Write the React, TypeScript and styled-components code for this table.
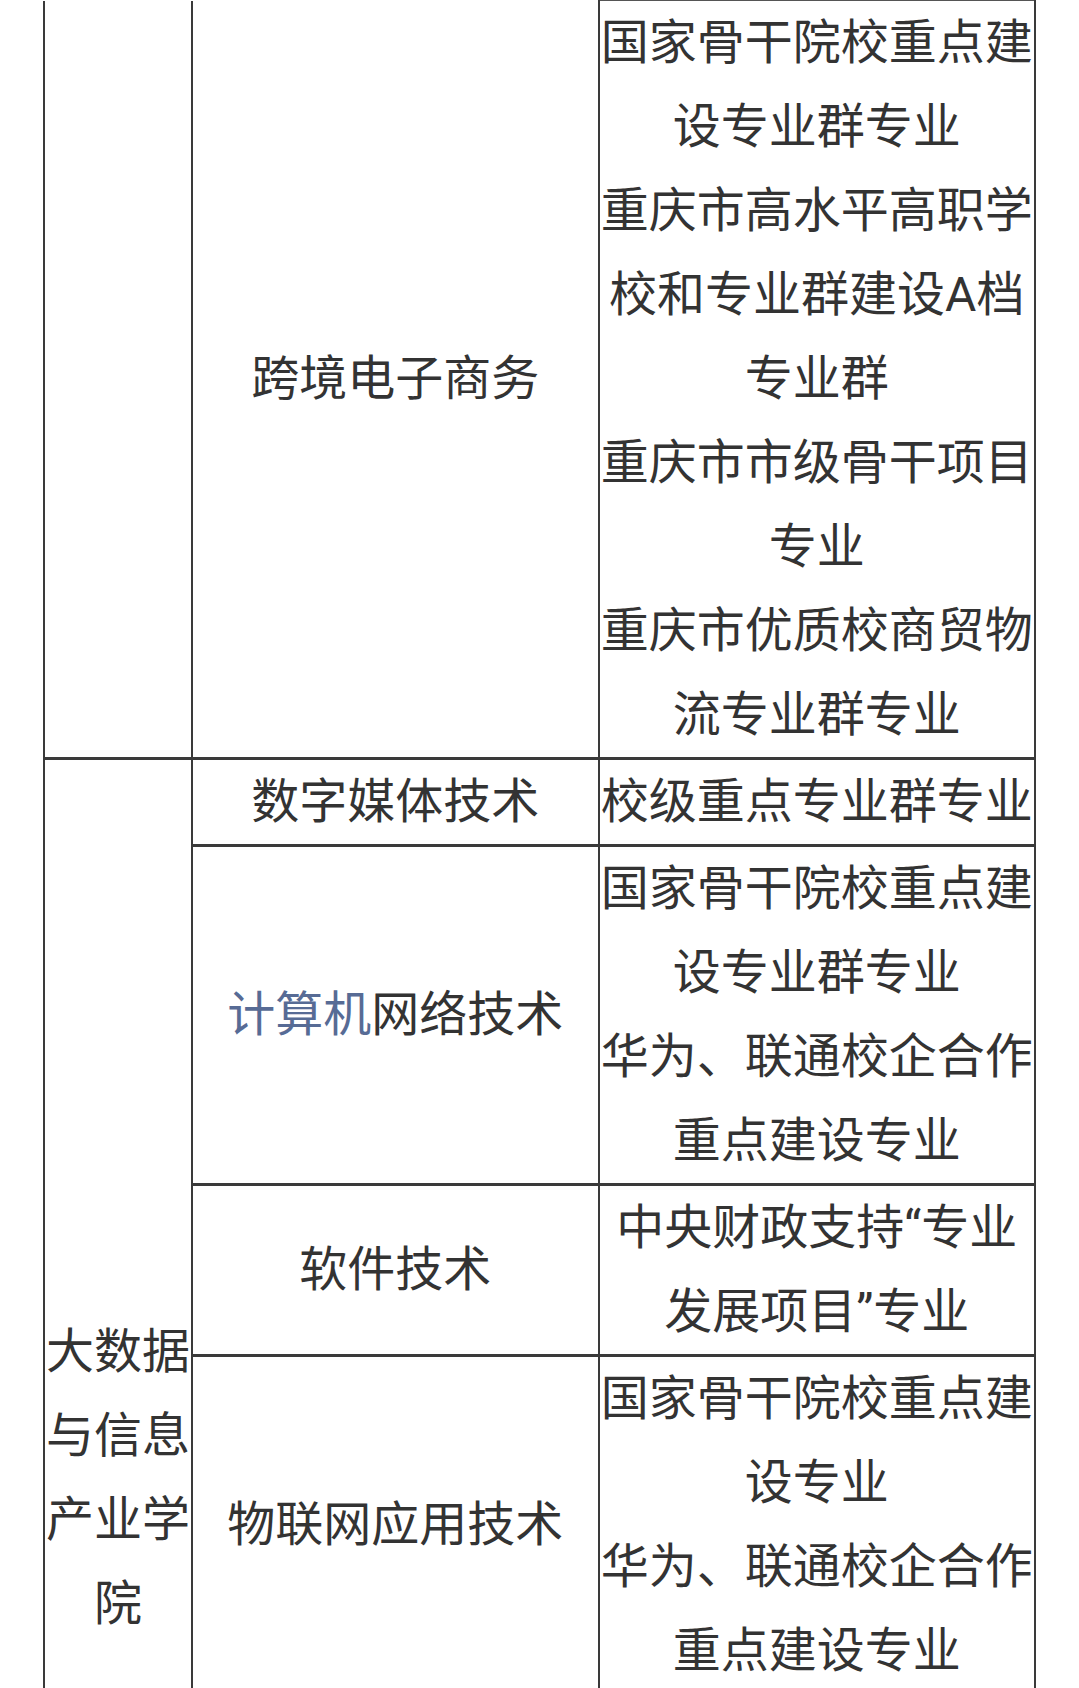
import React from 'react';
import styled, { createGlobalStyle } from 'styled-components';

const GlobalStyle = createGlobalStyle`
  html, body {
    margin: 0;
    padding: 0;
    background: #ffffff;
  }
  body {
    font-family: Roboto, "Noto Sans CJK SC", sans-serif;
    color: #333333;
  }
`;

const Page = styled.div`
  padding: 0 43px;
`;

const Table = styled.table`
  width: 993px;
  border-collapse: collapse;
  table-layout: fixed;
`;

const Cell = styled.td<{ $open?: boolean; $thinTop?: boolean }>`
  border: 2px solid #3a3a3a;
  border-top: ${(p) => (p.$open ? 'none' : p.$thinTop ? '1px solid #555' : '3px solid #3a3a3a')};
  padding: 0 1px;
  font-size: 48px;
  line-height: 84px;
  text-align: center;
  vertical-align: middle;
  word-break: break-all;
`;

const Note = styled.p`
  margin: 0;
`;

const Link = styled.span`
  color: #576b95;
`;

const Spacer = styled.div`
  height: 500px;
`;

interface Row {
  major: React.ReactNode;
  notes: string[];
}

const rows: Row[] = [
  { major: '数字媒体技术', notes: ['校级重点专业群专业'] },
  {
    major: (
      <>
        <Link>计算机</Link>网络技术
      </>
    ),
    notes: ['国家骨干院校重点建设专业群专业', '华为、联通校企合作重点建设专业'],
  },
  { major: '软件技术', notes: ['中央财政支持“专业发展项目”专业'] },
  {
    major: '物联网应用技术',
    notes: ['国家骨干院校重点建设专业', '华为、联通校企合作重点建设专业'],
  },
];

const App: React.FC = () => {
  return (
    <>
      <GlobalStyle />
      <Page>
        <Table>
          <colgroup>
            <col style={{ width: 148 }} />
            <col style={{ width: 406 }} />
            <col style={{ width: 436 }} />
          </colgroup>
          <tbody>
            {/* continued from the part of the table above the fold */}
            <tr>
              <Cell $open />
              <Cell $open>跨境电子商务</Cell>
              <Cell $thinTop>
                <Note>国家骨干院校重点建设专业群专业</Note>
                <Note>重庆市高水平高职学校和专业群建设A档专业群</Note>
                <Note>重庆市市级骨干项目专业</Note>
                <Note>重庆市优质校商贸物流专业群专业</Note>
              </Cell>
            </tr>
            {rows.map((row, i) => (
              <tr key={i}>
                {i === 0 && (
                  <Cell rowSpan={rows.length + 1}>
                    大数据与信息产业学院
                  </Cell>
                )}
                <Cell>{row.major}</Cell>
                <Cell>
                  {row.notes.map((n) => (
                    <Note key={n}>{n}</Note>
                  ))}
                </Cell>
              </tr>
            ))}
            <tr>
              <Cell>
                <Spacer />
              </Cell>
              <Cell />
            </tr>
          </tbody>
        </Table>
      </Page>
    </>
  );
};

export default App;
